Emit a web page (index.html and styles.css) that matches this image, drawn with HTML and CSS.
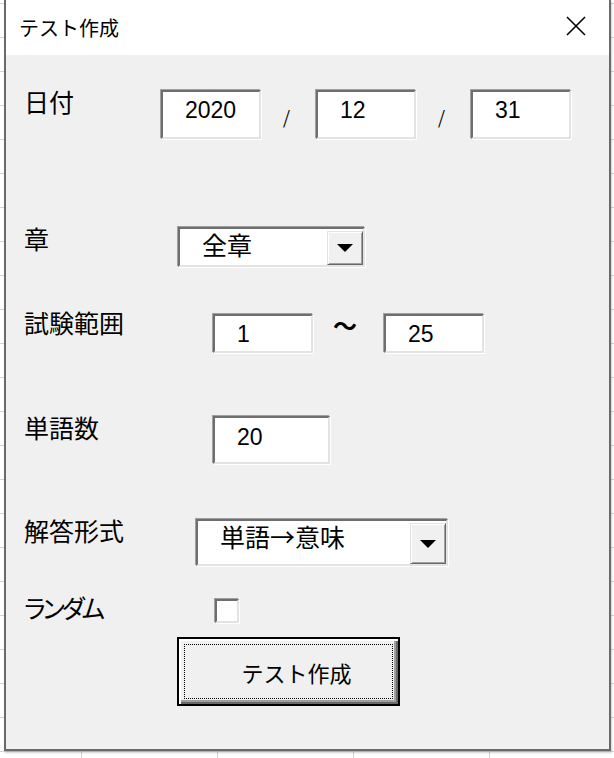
FILE: index.html
```html
<!DOCTYPE html>
<html lang="ja">
<head>
<meta charset="utf-8">
<title>テスト作成</title>
<link rel="stylesheet" href="styles.css">
</head>
<body>
<div class="window">
  <div class="titlebar">
    <span class="title">テスト作成</span>
    <svg class="close" width="20" height="20" viewBox="0 0 20 20" aria-label="閉じる">
      <path d="M1 1 L19 19 M19 1 L1 19" stroke="#000" stroke-width="1.6" fill="none"/>
    </svg>
  </div>
  <div class="form">
    <div class="row row-date">
      <div class="label label-date">日付</div>
      <div class="field field-date num">2020</div>
      <span class="slash">/</span>
      <div class="field field-date num">12</div>
      <span class="slash">/</span>
      <div class="field field-date num">31</div>
    </div>

    <div class="row row-chapter">
      <div class="label label-chapter">章</div>
      <div class="combo combo-chapter">
        <span class="combo-text">全章</span>
        <span class="combo-btn"><span class="arrow"></span></span>
      </div>
    </div>

    <div class="row row-range">
      <div class="label label-range label-up">試験範囲</div>
      <div class="field field-range num">1</div>
      <span class="tilde">〜</span>
      <div class="field field-range num">25</div>
    </div>

    <div class="row row-count">
      <div class="label label-count">単語数</div>
      <div class="field field-count num">20</div>
    </div>

    <div class="row row-format">
      <div class="label label-format">解答形式</div>
      <div class="combo combo-format">
        <span class="combo-text">単語→意味</span>
        <span class="combo-btn"><span class="arrow"></span></span>
      </div>
    </div>

    <div class="row row-random">
      <div class="label label-random label-up">ランダム</div>
      <div class="checkbox"></div>
    </div>

    <div class="row row-submit">
      <div class="btn"><div class="btn-focus">テスト作成</div></div>
    </div>
  </div>
</div>
</body>
</html>
```

FILE: styles.css
```css
html {
  background: #fff;
}

body {
  margin: 0;
  height: 758px;
  overflow: hidden;
  background-color: #fff;
  background-image:
    linear-gradient(#d4d4d4 1px, transparent 1px),
    linear-gradient(90deg, #d4d4d4 1px, transparent 1px);
  background-size: 100% 34px, 136px 100%;
  background-position: 0 3px, 81px 0;
  font-family: "Noto Sans CJK JP", sans-serif;
  color: #000;
}

.window {
  margin-left: 4px;
  width: 607px;
  box-sizing: border-box;
  border: 2px solid #6a6a6a;
  border-top: none;
  box-shadow: 1px 2px 2px rgba(0, 0, 0, 0.18);
}

.titlebar {
  height: 55px;
  background: #fff;
  display: flex;
  align-items: center;
  padding-left: 13px;
}

.title {
  font-size: 20px;
  line-height: 20px;
}

.close {
  margin-left: auto;
  margin-right: 23px;
  margin-bottom: 4px;
}

.form {
  height: 694px;
  box-sizing: border-box;
  background: #f0f0f0;
  padding-left: 18px;
  display: flex;
  flex-direction: column;
}

.row {
  display: flex;
  align-items: flex-start;
}

.row-date { margin-top: 34px; }
.row-chapter { margin-top: 86px; }
.row-range { margin-top: 45px; }
.row-count { margin-top: 61px; }
.row-format { margin-top: 53px; }
.row-random { margin-top: 31px; }
.row-submit { margin-top: 13px; }

.label {
  font-size: 25px;
  line-height: 25px;
  flex: none;
}

.label-up { margin-top: -3px; }

.label-date { width: 136px; }
.label-chapter { width: 153px; }
.label-range { width: 188px; }
.label-count { width: 188px; }
.label-format { width: 171px; }
.label-random {
  width: 190px;
  font-feature-settings: "palt";
  letter-spacing: -3px;
}

/* sunken 3D edit box */
.field,
.combo,
.checkbox {
  margin: 1px;
  box-sizing: border-box;
  background: #fff;
  border: 2px solid;
  border-color: #6e6e6e #e3e3e3 #e3e3e3 #6e6e6e;
  box-shadow: -1px -1px 0 #a0a0a0, 1px 1px 0 #fff;
  flex: none;
}

.num {
  font-family: "Liberation Sans", "Noto Sans CJK JP", sans-serif;
  font-size: 23px;
  line-height: 24px;
  padding: 6px 0 0 22px;
}

.field-date { width: 100px; height: 49px; }
.field-range { width: 100px; height: 39px; }
.field-count { width: 117px; height: 48px; padding-top: 7px; }

.slash {
  width: 53px;
  box-sizing: border-box;
  padding-right: 4px;
  text-align: center;
  font-family: "DejaVu Sans", sans-serif;
  font-weight: 300;
  font-size: 22px;
  line-height: 26px;
  padding-top: 17px;
  flex: none;
}

.tilde {
  width: 69px;
  box-sizing: border-box;
  padding-right: 7px;
  text-align: center;
  font-size: 24px;
  font-weight: 700;
  line-height: 24px;
  flex: none;
}

.combo {
  display: flex;
}

.combo-chapter { width: 187px; height: 40px; }
.combo-format { width: 252px; height: 47px; }

.combo-text {
  flex: 1;
  font-size: 25px;
  line-height: 25px;
  padding: 3px 0 0 22px;
}

.combo-btn {
  width: 36px;
  margin-top: 2px;
  box-sizing: border-box;
  background: #f0f0f0;
  border: 1px solid;
  border-color: #e3e3e3 #696969 #696969 #e3e3e3;
  box-shadow: inset 1px 1px 0 #fff, inset -1px -1px 0 #a0a0a0;
  display: flex;
  align-items: center;
  justify-content: center;
}

.arrow {
  width: 0;
  height: 0;
  border-left: 8px solid transparent;
  border-right: 8px solid transparent;
  border-top: 8px solid #000;
}

.checkbox {
  width: 24px;
  height: 24px;
}

.btn {
  margin-left: 153px;
  width: 223px;
  height: 69px;
  box-sizing: border-box;
  border: 2px solid #000;
  background: #f0f0f0;
  box-shadow: inset 2px 2px 0 #fff, inset -2px -2px 0 #696969, inset -4px -4px 0 #a0a0a0;
  padding: 5px;
}

.btn-focus {
  height: 100%;
  box-sizing: border-box;
  border: 1px dotted #000;
  display: flex;
  align-items: center;
  justify-content: center;
  padding-left: 16px;
  font-size: 22px;
  line-height: 22px;
}
```
